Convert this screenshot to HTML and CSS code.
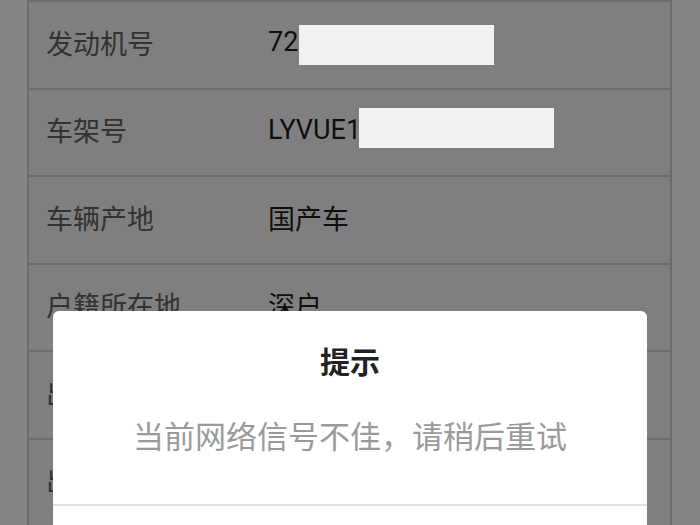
FILE: index.html
```html
<!DOCTYPE html>
<html lang="zh-CN">
<head>
<meta charset="utf-8">
<title>车辆信息</title>
<link rel="stylesheet" href="styles.css">
</head>
<body>
<div class="page">
  <div class="list">
    <div class="row"><div class="label">发动机号</div><div class="value">72<span class="redact r1"></span></div></div>
    <div class="row"><div class="label">车架号</div><div class="value">LYVUE1<span class="redact r2"></span></div></div>
    <div class="row"><div class="label">车辆产地</div><div class="value">国产车</div></div>
    <div class="row"><div class="label">户籍所在地</div><div class="value">深户</div></div>
    <div class="row"><div class="label">出厂日期</div><div class="value"></div></div>
    <div class="row"><div class="label">出险次数</div><div class="value"></div></div>
  </div>
</div>
<div class="mask"></div>
<div class="dialog">
  <div class="dialog-title">提示</div>
  <div class="dialog-msg">当前网络信号不佳，请稍后重试</div>
  <div class="dialog-actions"></div>
</div>
</body>
</html>
```
FILE: styles.css
```css
* { box-sizing: border-box; }
html, body { margin: 0; padding: 0; }
body {
  background: #ffffff;
  font-family: Roboto, "Noto Sans CJK SC", sans-serif;
  overflow: hidden;
  height: 525px;
}
.page {
  padding: 0 28px 0 27px;
}
.list {
  background: #f4f4f4;
  border-left: 2px solid #d0d0d0;
  border-right: 2px solid #d0d0d0;
  border-top: 2px solid #d0d0d0;
}
.row {
  height: 87.5px;
  border-bottom: 2px solid #d0d0d0;
  display: grid;
  grid-template-columns: 222px 1fr;
  align-items: center;
  padding: 0 0 5px 17px;
  font-size: 27px;
}
.label { color: #616161; }
.value { color: #1e1e1e; display: flex; align-items: center; }
.redact {
  display: inline-block;
  width: 195px;
  height: 40px;
  background: #f2f2f2;
  position: relative;
  z-index: 2;
}
.redact.r1 { margin: 6px 0 0 1px; }
.redact.r2 { margin: 0 0 4px -2px; }
.mask {
  position: fixed;
  inset: 0;
  background: rgba(0, 0, 0, 0.48);
  z-index: 1;
}
.dialog {
  position: fixed;
  left: 53px;
  top: 311px;
  width: 594px;
  height: 300px;
  background: #ffffff;
  border-radius: 6px;
  z-index: 3;
  text-align: center;
  padding-top: 32px;
}
.dialog-title {
  font-size: 30px;
  line-height: 40px;
  font-weight: 700;
  color: #222222;
}
.dialog-msg {
  margin-top: 35px;
  font-size: 31px;
  line-height: 40px;
  color: #9a9a9a;
  padding-bottom: 46px;
  border-bottom: 2px solid #e2e2e2;
}
.dialog-actions {
  height: 90px;
}
```
